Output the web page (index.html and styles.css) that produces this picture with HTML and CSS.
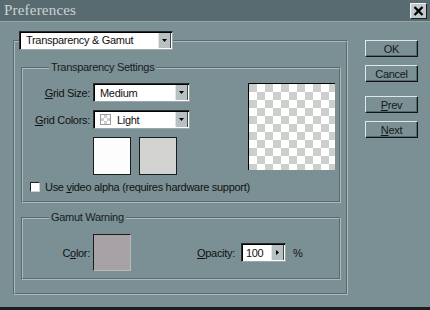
FILE: index.html
```html
<!DOCTYPE html>
<html>
<head>
<meta charset="utf-8">
<link rel="stylesheet" href="styles.css">
</head>
<body>
<div class="window">
  <div class="titlebar">
    <span class="title">Preferences</span>
    <span class="close"><svg width="11" height="10" viewBox="0 0 11 10"><path d="M1.5 1 L9.5 9 M9.5 1 L1.5 9" stroke="#000" stroke-width="2.4"/></svg></span>
  </div>
  <div class="content">
    <fieldset class="group outer">
      <legend class="select-legend">
        <div class="select wide"><span class="value">Transparency &amp; Gamut</span><span class="arrow"><svg width="5" height="3" viewBox="0 0 5 3"><path d="M0 0 H5 L2.5 3 Z" fill="#000"/></svg></span></div>
      </legend>
      <fieldset class="group trans">
        <legend>Transparency Settings</legend>
        <div class="trans-body">
          <div class="form-grid">
            <span class="lbl"><u>G</u>rid Size:</span>
            <div class="select mid"><span class="value">Medium</span><span class="arrow"><svg width="5" height="3" viewBox="0 0 5 3"><path d="M0 0 H5 L2.5 3 Z" fill="#000"/></svg></span></div>
            <span class="lbl"><u>G</u>rid Colors:</span>
            <div class="select mid"><span class="value"><span class="chk-icon"></span>Light</span><span class="arrow"><svg width="5" height="3" viewBox="0 0 5 3"><path d="M0 0 H5 L2.5 3 Z" fill="#000"/></svg></span></div>
            <span></span>
            <div class="swatches"><span class="swatch white"></span><span class="swatch gray"></span></div>
          </div>
          <div class="preview"></div>
        </div>
        <div class="check-row"><span class="checkbox"></span><span>Use <u>v</u>ideo alpha (requires hardware support)</span></div>
      </fieldset>
      <fieldset class="group gamut">
        <legend>Gamut Warning</legend>
        <div class="gamut-row">
          <span class="lbl">C<u>o</u>lor:</span>
          <span class="swatch warn"></span>
          <span class="opacity-lbl"><u>O</u>pacity:</span>
          <div class="numbox"><span class="num">100</span><span class="num-arrow"><svg width="3" height="5" viewBox="0 0 3 5"><path d="M0 0 V5 L3 2.5 Z" fill="#000"/></svg></span></div>
          <span class="pct">%</span>
        </div>
      </fieldset>
    </fieldset>
    <div class="buttons">
      <div class="btn">OK</div>
      <div class="btn">Cancel</div>
      <div class="btn gap"><u>P</u>rev</div>
      <div class="btn"><u>N</u>ext</div>
    </div>
  </div>
</div>
</body>
</html>
```

FILE: styles.css
```css
body {
  margin: 0;
  font-family: "Liberation Sans", Arial, sans-serif;
  font-size: 11px;
  letter-spacing: -0.3px;
  color: #111;
}
.window {
  width: 430px;
  height: 310px;
  background: #7b9095;
  box-sizing: border-box;
  border-bottom: 3px solid #1a1e1f;
  display: flex;
  flex-direction: column;
}
.titlebar {
  height: 22px;
  box-sizing: border-box;
  background: #586b71;
  border-bottom: 1px solid #93a5a9;
  display: flex;
  align-items: center;
  justify-content: space-between;
  padding: 0 3px 0 4px;
}
.title {
  font-family: "Liberation Serif", serif;
  font-size: 15px;
  color: #cbd3d4;
  letter-spacing: 0.2px;
}
.close {
  width: 17px;
  height: 16px;
  box-sizing: border-box;
  background: #c3cbcc;
  border: 1px solid;
  border-color: #eef2f2 #1c1c1c #1c1c1c #eef2f2;
  display: flex;
  align-items: center;
  justify-content: center;
}
.content {
  display: flex;
  padding: 9px 0 0 13px;
}
.group {
  margin: 0;
  padding: 0;
  border: 2px groove #a9bbbe;
  box-sizing: border-box;
  min-width: 0;
}
.group > legend {
  padding: 0 2px;
  color: #161c1e;
  line-height: 13px;
}
.outer {
  width: 335px;
  height: 264px;
  padding: 0 6px;
}
.outer > legend.select-legend {
  padding: 0;
  margin-left: -2px;
}
.select {
  height: 19px;
  box-sizing: border-box;
  background: #fff;
  border: 1px solid;
  border-color: #2a2a2a #9aa8aa #9aa8aa #2a2a2a;
  box-shadow: inset 1px 1px 0 #000;
  display: flex;
  align-items: stretch;
}
.select .value {
  flex: 1;
  display: flex;
  align-items: center;
  padding-left: 6px;
  white-space: nowrap;
  color: #111;
}
.select .arrow {
  width: 11px;
  margin: 1px 1px 1px 0;
  background: #b7c1c2;
  border-left: 1px solid #e0e6e6;
  border-right: 1px solid #404848;
  display: flex;
  align-items: center;
  justify-content: center;
}
.wide { width: 154px; }
.mid { width: 97px; }
.trans {
  margin-top: 11px;
  width: 320px;
  height: 142px;
  padding: 0 4px 0 8px;
}
.trans > legend, .gamut > legend {
  margin-left: 18px;
}
.trans-body {
  display: flex;
  justify-content: space-between;
  margin-top: 9px;
}
.form-grid {
  display: grid;
  grid-template-columns: 59px 97px;
  column-gap: 3px;
  row-gap: 8px;
  align-items: center;
}
.lbl {
  text-align: right;
  white-space: nowrap;
}
.chk-icon {
  width: 11px;
  height: 11px;
  margin-right: 6px;
  border: 1px solid #9a9a9a;
  box-sizing: border-box;
  background-color: #fff;
  background-image: conic-gradient(#cfcfcf 25%, #fff 0 50%, #cfcfcf 0 75%, #fff 0);
  background-size: 6px 6px;
}
.swatches {
  display: flex;
  gap: 8px;
}
.swatch {
  width: 38px;
  height: 38px;
  box-sizing: border-box;
  border: 1px solid #1c1c1c;
}
.white { background: #fdfdfd; }
.gray { background: #d2d2d0; }
.preview {
  width: 87px;
  height: 87px;
  box-sizing: border-box;
  border-top: 1px solid #000;
  border-left: 1px solid #000;
  background-color: #fff;
  background-image: conic-gradient(#fff 25%, #cdcfcd 0 50%, #fff 0 75%, #cdcfcd 0);
  background-size: 16px 16px;
}
.check-row {
  display: flex;
  align-items: center;
  gap: 5px;
  margin-top: 6px;
  margin-left: -1px;
  white-space: nowrap;
}
.checkbox {
  width: 10px;
  height: 10px;
  box-sizing: border-box;
  background: #fff;
  border: 1px solid;
  border-color: #222 #c8d2d2 #c8d2d2 #222;
}
.gamut {
  margin-top: 8px;
  width: 320px;
  height: 69px;
  padding: 0 4px 0 8px;
}
.gamut-row {
  display: flex;
  align-items: center;
  margin-top: 10px;
}
.gamut-row .lbl {
  width: 59px;
  margin-right: 3px;
}
.swatch.warn {
  height: 37px;
  background: #a8a2a6;
  border-color: #1c1c1c #b4bcbd #b4bcbd #1c1c1c;
}
.opacity-lbl {
  margin-left: 66px;
  margin-right: 6px;
}
.numbox {
  width: 45px;
  height: 19px;
  box-sizing: border-box;
  background: #fff;
  border: 1px solid;
  border-color: #2a2a2a #9aa8aa #9aa8aa #2a2a2a;
  box-shadow: inset 1px 1px 0 #000;
  display: flex;
}
.num {
  flex: 1;
  padding-left: 4px;
  display: flex;
  align-items: center;
}
.num-arrow {
  width: 11px;
  margin: 1px 1px 1px 0;
  background: #b7c1c2;
  border-left: 1px solid #e0e6e6;
  border-right: 1px solid #404848;
  display: flex;
  align-items: center;
  justify-content: center;
}
.pct {
  margin-left: 7px;
}
.buttons {
  display: flex;
  flex-direction: column;
  gap: 8px;
  margin-left: 17px;
  margin-top: 9px;
}
.btn {
  width: 53px;
  height: 17px;
  box-sizing: border-box;
  border: 1px solid;
  border-color: #dfe7e8 #121515 #121515 #dfe7e8;
  box-shadow: inset -1px -1px 0 #56686c;
  display: flex;
  align-items: center;
  justify-content: center;
  color: #141818;
}
.btn.gap {
  margin-top: 6px;
}
```
